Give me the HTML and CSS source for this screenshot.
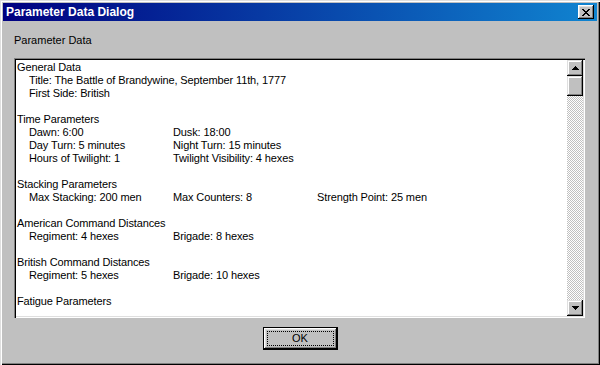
FILE: index.html
```html
<!DOCTYPE html>
<html lang="en">
<head>
    <meta charset="UTF-8">
    <title>Parameter Data Dialog</title>
    <link rel="stylesheet" href="styles.css">
</head>
<body>
    <div class="dialog">
        <div class="title-bar">
            <span class="title-text">Parameter Data Dialog</span>
            <button class="close-btn" aria-label="Close">
                <svg width="8" height="7" viewBox="0 0 8 7">
                    <path d="M0 0h2v1h1v1h2v-1h1v-1h2v1h-1v1h-1v1h-1v1h1v1h1v1h1v1h-2v-1h-1v-1h-2v1h-1v1h-2v-1h1v-1h1v-1h1v-1h-1v-1h-1v-1h-1z" fill="#000"/>
                </svg>
            </button>
        </div>

        <div class="dialog-body">
            <div class="group-label">Parameter Data</div>

            <div class="listbox">
                <div class="list-content">
                    <div class="section">
                        <div class="heading">General Data</div>
                        <div class="row"><span>Title: The Battle of Brandywine, September 11th, 1777</span></div>
                        <div class="row"><span>First Side: British</span></div>
                    </div>
                    <div class="section">
                        <div class="heading">Time Parameters</div>
                        <div class="row"><span>Dawn: 6:00</span><span>Dusk: 18:00</span></div>
                        <div class="row"><span>Day Turn: 5 minutes</span><span>Night Turn: 15 minutes</span></div>
                        <div class="row"><span>Hours of Twilight: 1</span><span>Twilight Visibility: 4 hexes</span></div>
                    </div>
                    <div class="section">
                        <div class="heading">Stacking Parameters</div>
                        <div class="row"><span>Max Stacking: 200 men</span><span>Max Counters: 8</span><span>Strength Point: 25 men</span></div>
                    </div>
                    <div class="section">
                        <div class="heading">American Command Distances</div>
                        <div class="row"><span>Regiment: 4 hexes</span><span>Brigade: 8 hexes</span></div>
                    </div>
                    <div class="section">
                        <div class="heading">British Command Distances</div>
                        <div class="row"><span>Regiment: 5 hexes</span><span>Brigade: 10 hexes</span></div>
                    </div>
                    <div class="section">
                        <div class="heading">Fatigue Parameters</div>
                    </div>
                </div>

                <div class="scrollbar">
                    <div class="scroll-btn">
                        <svg width="7" height="4" viewBox="0 0 7 4"><path d="M3 0h1v1h1v1h1v1h1v1h-7v-1h1v-1h1v-1h1z" fill="#000"/></svg>
                    </div>
                    <div class="scroll-thumb"></div>
                    <div class="scroll-track"></div>
                    <div class="scroll-btn">
                        <svg width="7" height="4" viewBox="0 0 7 4"><path d="M0 0h7v1h-1v1h-1v1h-1v1h-1v-1h-1v-1h-1v-1h-1z" fill="#000"/></svg>
                    </div>
                </div>
            </div>

            <div class="button-row">
                <button class="ok-btn"><span class="focus-rect">OK</span></button>
            </div>
        </div>
    </div>
</body>
</html>
```

FILE: styles.css
```css
body {
    margin: 0;
    background: #c0c0c0;
    font-family: "Liberation Sans", Arial, sans-serif;
    font-size: 11px;
    color: #000;
}
.dialog {
    width: 600px;
    height: 365px;
    box-sizing: border-box;
    padding: 3px;
    background: #c0c0c0;
    box-shadow: inset 1px 1px 0 #dfdfdf, inset 2px 2px 0 #fff, inset -1px -1px 0 #000, inset -2px -2px 0 #808080;
    display: flex;
    flex-direction: column;
}
.title-bar {
    height: 18px;
    background: linear-gradient(to right, #000080, #1084d0);
    display: flex;
    align-items: center;
    justify-content: space-between;
    padding: 0 3px 0 3px;
}
.title-text {
    color: #fff;
    font-weight: bold;
    font-size: 12px;
}
.close-btn {
    width: 16px;
    height: 14px;
    padding: 0;
    border: none;
    background: #c0c0c0;
    box-shadow: inset -1px -1px 0 #000, inset 1px 1px 0 #fff, inset -2px -2px 0 #808080, inset 2px 2px 0 #dfdfdf;
    display: flex;
    align-items: center;
    justify-content: center;
}
.close-btn svg {
    display: block;
    margin-left: -1px;
}
.dialog-body {
    flex: 1;
    display: flex;
    flex-direction: column;
    padding: 0 12px 0 11px;
}
.group-label {
    margin-top: 13px;
    height: 13px;
    line-height: 13px;
}
.listbox {
    margin-top: 11px;
    height: 260px;
    box-sizing: border-box;
    background: #fff;
    box-shadow: inset 1px 1px 0 #808080, inset 2px 2px 0 #000, inset -1px -1px 0 #fff, inset -2px -2px 0 #dfdfdf;
    padding: 2px;
    display: flex;
    overflow: hidden;
}
.list-content {
    flex: 1;
    padding: 1px 0 0 1px;
    line-height: 13px;
    letter-spacing: -0.12px;
    overflow: hidden;
}
.section {
    margin-bottom: 13px;
}
.row {
    display: grid;
    grid-template-columns: 144px 144px auto;
    padding-left: 12px;
    white-space: nowrap;
}
.scrollbar {
    width: 16px;
    display: flex;
    flex-direction: column;
}
.scroll-btn {
    height: 16px;
    background: #c0c0c0;
    box-shadow: inset -1px -1px 0 #000, inset 1px 1px 0 #dfdfdf, inset -2px -2px 0 #808080, inset 2px 2px 0 #fff;
    display: flex;
    align-items: center;
    justify-content: center;
}
.scroll-btn svg {
    display: block;
}
.scroll-thumb {
    height: 20px;
    background: #c0c0c0;
    box-shadow: inset -1px -1px 0 #000, inset 1px 1px 0 #dfdfdf, inset -2px -2px 0 #808080, inset 2px 2px 0 #fff;
}
.scroll-track {
    flex: 1;
    background: repeating-conic-gradient(#c0c0c0 0 25%, #fff 0 50%) 0 0 / 2px 2px;
}
.button-row {
    display: flex;
    justify-content: center;
    margin-top: 9px;
    padding-left: 1px;
}
.ok-btn {
    width: 75px;
    height: 23px;
    padding: 3px;
    border: 1px solid #000;
    background: #c0c0c0;
    box-shadow: inset -1px -1px 0 #000, inset 1px 1px 0 #fff, inset -2px -2px 0 #808080, inset 2px 2px 0 #dfdfdf;
    font-family: "Liberation Sans", Arial, sans-serif;
    font-size: 11px;
    color: #000;
    display: flex;
}
.focus-rect {
    flex: 1;
    border: 1px dotted #000;
    display: flex;
    align-items: center;
    justify-content: center;
    line-height: 11px;
}
```
